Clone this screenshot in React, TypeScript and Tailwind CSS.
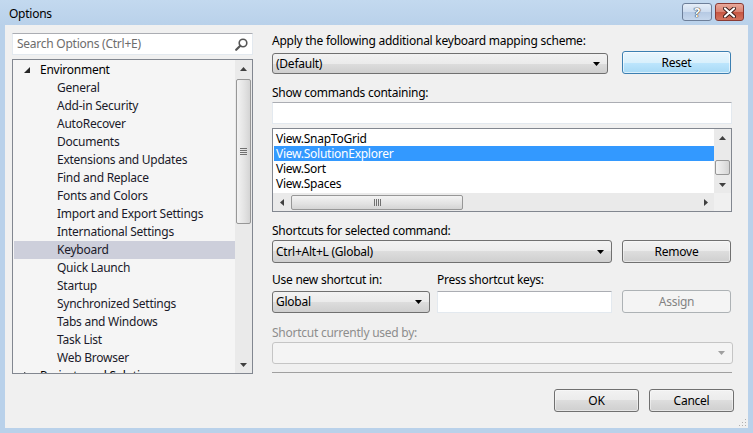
import React from "react";

function Arrow({ color = "#000", dir = "down" }: { color?: string; dir?: "down" | "up" | "left" | "right" }) {
  const pts =
    dir === "down" ? "0,0 7,0 3.5,4" : dir === "up" ? "0,4 7,4 3.5,0" : dir === "left" ? "4,0 4,7 0,3.5" : "0,0 0,7 4,3.5";
  const w = dir === "down" || dir === "up" ? 7 : 4;
  const h = dir === "down" || dir === "up" ? 4 : 7;
  return (
    <svg width={w} height={h} viewBox={`0 0 ${w} ${h}`} className="block">
      <polygon points={pts} fill={color} />
    </svg>
  );
}

function Combo({ text, className, disabled }: { text?: string; className: string; disabled?: boolean }) {
  return (
    <div
      className={
        "flex items-center justify-between rounded-[3px] border pl-[3px] pr-[7px] " +
        (disabled
          ? "border-[#c5c5c5] bg-[#f4f4f4] text-[#8d8d8d] "
          : "border-[#707070] bg-[linear-gradient(#f2f2f2_0%,#ebebeb_50%,#dddddd_50%,#cfcfcf_100%)] text-black ") +
        className
      }
    >
      <span className="leading-none">{text}</span>
      <Arrow color={disabled ? "#a0a0a0" : "#000"} />
    </div>
  );
}

function Button({ text, className, variant }: { text: string; className: string; variant?: "default" | "focus" | "disabled" }) {
  const v =
    variant === "focus"
      ? "border-[#3c7fb1] bg-[linear-gradient(#eaf6fd_0%,#d9f0fc_50%,#bee6fd_50%,#a7d9f5_100%)] text-black shadow-[inset_0_0_0_1px_#ffffff99]"
      : variant === "disabled"
      ? "border-[#adb2b5] bg-[#f4f4f4] text-[#838383]"
      : "border-[#707070] bg-[linear-gradient(#f2f2f2_0%,#ebebeb_50%,#dddddd_50%,#cfcfcf_100%)] text-black shadow-[inset_0_0_0_1px_#fcfcfc80]";
  return <div className={"flex items-center justify-center rounded-[3px] border " + v + " " + className}>{text}</div>;
}

function TextBox({ className }: { className: string }) {
  return <div className={"border border-[#e3e9ef] border-t-[#abadb3] bg-white " + className} />;
}

const treeItems = [
  "General",
  "Add-in Security",
  "AutoRecover",
  "Documents",
  "Extensions and Updates",
  "Find and Replace",
  "Fonts and Colors",
  "Import and Export Settings",
  "International Settings",
  "Keyboard",
  "Quick Launch",
  "Startup",
  "Synchronized Settings",
  "Tabs and Windows",
  "Task List",
  "Web Browser",
];

function VScroll({ thumbTop, thumbH, trackH }: { thumbTop: number; thumbH: number; trackH: number }) {
  return (
    <div className="flex w-[17px] flex-col bg-[#eaeaea]" style={{ height: trackH }}>
      <div className="flex h-[17px] items-center justify-center">
        <Arrow dir="up" color="#404040" />
      </div>
      <div className="relative flex-1">
        <div
          className="absolute left-[1px] right-[1px] flex items-center justify-center rounded-[2px] border border-[#979797] bg-[linear-gradient(90deg,#f3f3f3,#e2e2e2_60%,#d4d4d4)]"
          style={{ top: thumbTop, height: thumbH }}
        >
          {thumbH > 30 && (
            <div className="flex flex-col gap-[1px]">
              <div className="h-[1px] w-[7px] bg-[#707070]" />
              <div className="h-[1px] w-[7px] bg-[#707070]" />
              <div className="h-[1px] w-[7px] bg-[#707070]" />
              <div className="h-[1px] w-[7px] bg-[#707070]" />
            </div>
          )}
        </div>
      </div>
      <div className="flex h-[17px] items-center justify-center">
        <Arrow dir="down" color="#404040" />
      </div>
    </div>
  );
}

export default function App() {
  return (
    <div className="flex h-[433px] w-[753px] flex-col overflow-hidden bg-[#b9d1ea] font-['Segoe_UI','Noto_Sans',sans-serif] text-[12px] tracking-[-0.25px] text-black">
      {/* title bar */}
      <div className="flex h-[25px] items-start bg-[linear-gradient(#c3d9ef,#b9d1ea)]">
        <div className="ml-[9px] mt-[6px] text-[12px] leading-[15px]">Options</div>
        <div className="ml-auto mr-[9px] mt-[3px] flex gap-[3px]">
          <div className="flex h-[18px] w-[30px] items-center justify-center rounded-[3px] border border-[#6d7f99] bg-[linear-gradient(#e5eef8_0%,#cddcef_50%,#b5c9e3_50%,#c6d7ec_100%)]">
            <span className="text-[13px] font-bold leading-none text-white [text-shadow:0_0_1px_#333,0_0_1px_#333,0_0_1px_#333]">?</span>
          </div>
          <div className="flex h-[18px] w-[29px] items-center justify-center rounded-[3px] border border-[#8a3a33] bg-[linear-gradient(#e9a99b_0%,#d98271_50%,#c75541_50%,#d3735e_100%)]">
            <svg width="13" height="11" viewBox="0 0 13 11">
              <path d="M2 1.5 L11 9.5 M11 1.5 L2 9.5" stroke="#3a1a15" strokeWidth="4" strokeLinecap="round" />
              <path d="M2 1.5 L11 9.5 M11 1.5 L2 9.5" stroke="#ffffff" strokeWidth="2.2" strokeLinecap="round" />
            </svg>
          </div>
        </div>
      </div>

      {/* client */}
      <div className="relative mx-[5px] mb-[5px] flex flex-1 gap-[19px] bg-[#f0f0f0] pl-[7px] pt-[8px]">
        {/* left column */}
        <div className="flex w-[241px] flex-col">
          <div className="flex h-[22px] items-center justify-between border border-[#e3e9ef] border-t-[#abadb3] bg-white pl-[4px] pr-[4px]">
            <span className="text-[#6d6d6d]">Search Options (Ctrl+E)</span>
            <svg width="13" height="13" viewBox="0 0 13 13">
              <circle cx="8" cy="5" r="3.8" fill="none" stroke="#555" strokeWidth="1.6" />
              <path d="M5.3 7.7 L1.2 11.8" stroke="#555" strokeWidth="2.2" strokeLinecap="round" />
            </svg>
          </div>
          <div className="mt-[4px] flex h-[315px] border border-[#828790] bg-[#f5f5f5]">
            <div className="flex-1 overflow-hidden pl-[1px] pt-[1px]">
              <div className="flex h-[18px] items-center leading-[18px]">
                <div className="ml-[10px] mr-[11px] w-[5px]">
                  <svg width="6" height="6" viewBox="0 0 6 6" className="block">
                    <polygon points="6,0 6,6 0,6" fill="#262626" />
                  </svg>
                </div>
                <span>Environment</span>
              </div>
              {treeItems.map((t) => (
                <div
                  key={t}
                  className={"flex h-[18px] items-center pl-[43px] leading-[18px] text-[#1a1a2a] " + (t === "Keyboard" ? "bg-[#cdcfdb]" : "")}
                >
                  {t}
                </div>
              ))}
              <div className="flex h-[18px] items-center leading-[18px]">
                <div className="ml-[10px] mr-[11px] w-[5px]">
                  <svg width="5" height="8" viewBox="0 0 5 8" className="block">
                    <polygon points="0,0 5,4 0,8" fill="none" stroke="#555" />
                  </svg>
                </div>
                <span>Projects and Solutions</span>
              </div>
            </div>
            <VScroll thumbTop={2} thumbH={145} trackH={313} />
          </div>
        </div>

        {/* right column */}
        <div className="flex w-[462px] flex-col">
          <div className="h-[15px] leading-[15px]">Apply the following additional keyboard mapping scheme:</div>
          <div className="mt-[3px] flex h-[23px] items-end gap-[14px]">
            <Combo text="(Default)" className="h-[21px] w-[336px]" />
            <Button text="Reset" variant="focus" className="h-[23px] w-[109px]" />
          </div>

          <div className="mt-[11px] h-[15px] leading-[15px]">Show commands containing:</div>
          <TextBox className="mt-[2px] h-[22px] w-[460px]" />

          <div className="mt-[4px] flex h-[84px] w-[460px] flex-col border border-[#828790] bg-white">
            <div className="flex h-[64px]">
              <div className="flex-1 overflow-hidden pl-[1px] pt-[2px]">
                <div className="flex h-[15px] items-center pl-[2px] leading-[15px]">View.SnapToGrid</div>
                <div className="flex h-[15px] items-center bg-[#3399ff] pl-[2px] leading-[15px] text-white">View.SolutionExplorer</div>
                <div className="flex h-[15px] items-center pl-[2px] leading-[15px]">View.Sort</div>
                <div className="flex h-[15px] items-center pl-[2px] leading-[15px]">View.Spaces</div>
              </div>
              <div className="flex w-[17px] flex-col bg-[#eaeaea]">
                <div className="flex h-[17px] items-center justify-center">
                  <Arrow dir="up" color="#404040" />
                </div>
                <div className="relative flex-1">
                  <div className="absolute left-[1px] right-[1px] top-[14px] h-[15px] rounded-[2px] border border-[#979797] bg-[linear-gradient(90deg,#f3f3f3,#e2e2e2_60%,#d4d4d4)]" />
                </div>
                <div className="flex h-[16px] items-center justify-center">
                  <Arrow dir="down" color="#404040" />
                </div>
              </div>
            </div>
            <div className="flex h-[18px]">
              <div className="relative flex flex-1 items-center bg-[#eaeaea]">
                <div className="flex w-[17px] items-center justify-center">
                  <Arrow dir="left" color="#404040" />
                </div>
                <div className="ml-[1px] flex h-[15px] w-[172px] items-center justify-center rounded-[2px] border border-[#979797] bg-[linear-gradient(#f3f3f3,#e2e2e2_60%,#d4d4d4)]">
                  <div className="flex gap-[1px]">
                    <div className="h-[7px] w-[1px] bg-[#707070]" />
                    <div className="h-[7px] w-[1px] bg-[#707070]" />
                    <div className="h-[7px] w-[1px] bg-[#707070]" />
                    <div className="h-[7px] w-[1px] bg-[#707070]" />
                  </div>
                </div>
                <div className="ml-auto flex w-[17px] items-center justify-center">
                  <Arrow dir="right" color="#404040" />
                </div>
              </div>
              <div className="w-[17px] bg-[#f0f0f0]" />
            </div>
          </div>

          <div className="mt-[11px] h-[15px] leading-[15px]">Shortcuts for selected command:</div>
          <div className="mt-[2px] flex h-[23px] gap-[10px]">
            <Combo text="Ctrl+Alt+L (Global)" className="h-[23px] w-[340px]" />
            <Button text="Remove" className="h-[23px] w-[109px]" />
          </div>

          <div className="mt-[9px] flex h-[15px] leading-[15px]">
            <div className="w-[165px]">Use new shortcut in:</div>
            <div>Press shortcut keys:</div>
          </div>
          <div className="mt-[3px] flex h-[23px] items-end">
            <Combo text="Global" className="h-[22px] w-[158px]" />
            <TextBox className="ml-[7px] h-[22px] w-[175px]" />
            <Button text="Assign" variant="disabled" className="ml-[10px] h-[23px] w-[109px]" />
          </div>

          <div className="mt-[12px] h-[15px] leading-[15px] text-[#8d8d8d]">Shortcut currently used by:</div>
          <Combo disabled className="mt-[2px] h-[22px] w-[461px]" />

          <div className="mt-[8px] h-[1px] w-[460px] bg-[#a0a0a0]" />

          <div className="mt-[16px] flex h-[23px] w-[462px] justify-end gap-[10px]">
            <Button text="OK" className="h-[23px] w-[85px]" />
            <Button text="Cancel" className="h-[23px] w-[85px]" />
          </div>
        </div>

        {/* resize grip */}
        <svg width="8" height="8" viewBox="0 0 8 8" className="absolute bottom-[1px] right-[1px]">
          <rect x="6" y="0" width="1" height="1" fill="#b0b0b0" />
          <rect x="3" y="3" width="1" height="1" fill="#b0b0b0" />
          <rect x="6" y="3" width="1" height="1" fill="#b0b0b0" />
          <rect x="0" y="6" width="1" height="1" fill="#b0b0b0" />
          <rect x="3" y="6" width="1" height="1" fill="#b0b0b0" />
          <rect x="6" y="6" width="1" height="1" fill="#b0b0b0" />
        </svg>
      </div>
    </div>
  );
}
